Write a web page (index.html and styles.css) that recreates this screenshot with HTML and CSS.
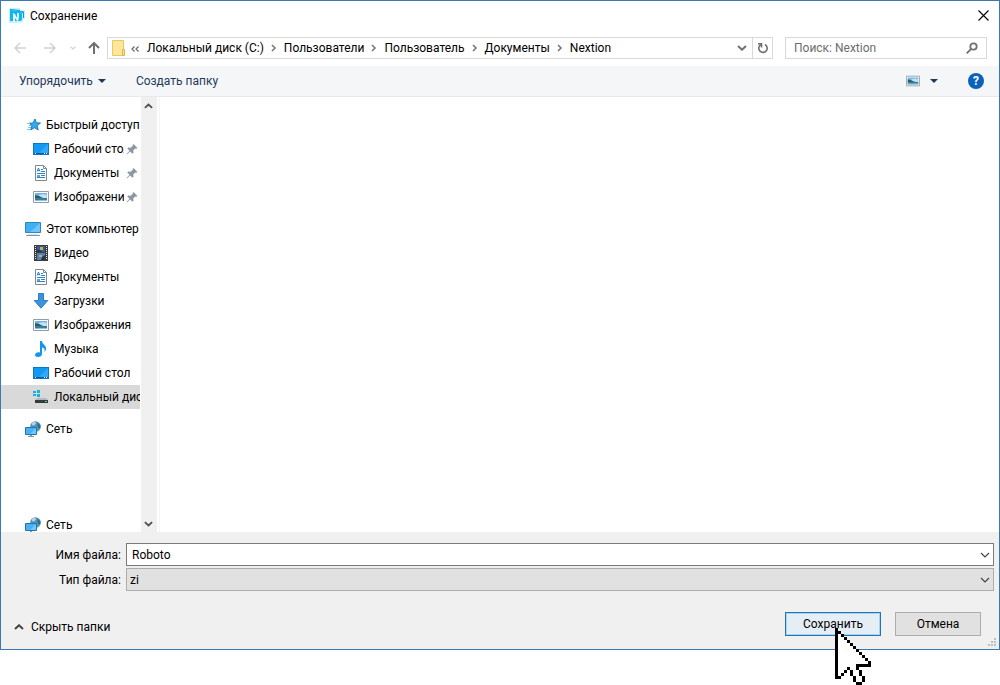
FILE: index.html
```html
<!DOCTYPE html>
<html lang="ru">
<head>
  <meta charset="UTF-8" />
  <meta name="viewport" content="width=device-width, initial-scale=1.0"/>
  <title>Сохранение</title>
  <link rel="stylesheet" href="styles.css">
</head>
<body>
  <!-- shared icons -->
  <svg class="sprite" aria-hidden="true">
    <symbol id="chevron-right" viewBox="0 0 6 8"><path d="M1 1l3 3-3 3" fill="none" stroke="#777" stroke-width="1.6"/></symbol>
    <symbol id="chevron-down" viewBox="0 0 10 6"><path d="M1 1l4 4 4-4" fill="none" stroke="currentColor" stroke-width="1.2"/></symbol>
    <symbol id="chevron-bold" viewBox="0 0 10 6"><path d="M1 1l4 3.7L9 1" fill="none" stroke="currentColor" stroke-width="2"/></symbol>
    <symbol id="caret" viewBox="0 0 8 4"><path d="M0 0h8L4 4z" fill="#1e395b"/></symbol>
    <symbol id="pin" viewBox="0 0 12 12">
      <path d="M7.500 1l4 4-1.500.7-.8-.2-2 2 .3 2.300-1 1L4 8.500 1 11.500l-.5-.5 3-3.200L1.300 5.500l1-1 2.400.3 2-2-.1-.8z" fill="#8c98a3"/>
    </symbol>
    <symbol id="desktop" viewBox="0 0 16 16">
      <path d="M0 2h16v12H0z" fill="#0b77c5"/>
      <path d="M1 3h14v9H1z" fill="#1299f6"/>
      <path d="M15 3v9H6z" fill="#31a9fb"/>
      <path d="M1 12h14v1H1z" fill="#07589c"/>
      <path d="M2 12h1v1H2zM11 12h1v1h-1zM13 12h1v1h-1z" fill="#fff"/>
    </symbol>
    <symbol id="document" viewBox="0 0 16 16">
      <path d="M2.500.5h8l3 3v12h-11z" fill="#fff" stroke="#7e8890"/>
      <path d="M10.500.5v3h3" fill="none" stroke="#7e8890"/>
      <path d="M4 6.500L5.500 3 7 6.500M4.500 5.500h2M8 4.500h2M8 6.500h4M4 8.500h8M8 10.500h4M4 12.500h8" fill="none" stroke="#2c83c6"/>
      <path d="M4 10h3v2H4z" fill="#5aa3d8"/>
    </symbol>
    <symbol id="picture" viewBox="0 0 16 16">
      <path d="M.5 2.500h15v11H.5z" fill="#fff" stroke="#929ca4"/>
      <path d="M2 4h12v8H2z" fill="#76b3e5"/>
      <path d="M6 6l4-1 4 1v3H7z" fill="#c3e0f3"/>
      <path d="M2 6l4 1 5 2.500H2z" fill="#246068"/>
      <path d="M2 9h12v2H2z" fill="#397d98"/>
      <path d="M2 11h12v1H2z" fill="#8cbfd8"/>
    </symbol>
    <symbol id="network" viewBox="0 0 16 16">
      <circle cx="10.500" cy="5.500" r="5.300" fill="#5593b0"/>
      <path d="M7 2l3-1.500 1 2-2 2-2-.5zM8 6l3 1-1 3-2-1z" fill="#b4d8e5"/>
      <path d="M12.500 1.500l3 3-.5 3-2-1-.5-2z" fill="#2d6e90"/>
      <path d="M.5 6.500h11v7H.5z" fill="#49b2f6" stroke="#2374ad"/>
      <path d="M11 7v6H5z" fill="#73c6fa"/>
      <path d="M5 14h2v1h2v1H3v-1h2z" fill="#7d9aad"/>
    </symbol>
  </svg>

  <main class="dialog">
    <header class="titlebar">
      <svg class="icon" viewBox="0 0 16 16">
        <path d="M0 0h11v2h5v9h-2v3l-5 1H0z" fill="#c4f1ff"/>
        <path d="M1 1l10 1v1l4 .5V10h-1V5l-3-.5V3L1 2z" fill="#1399cd"/>
        <path d="M1 2l10 1v2h2v7l-2 1H1z" fill="#0cb6f2"/>
        <path d="M4 14V5l2 1 2 4V5h2v4l-1 5-3-4v4z" fill="#e6faff"/>
      </svg>
      <h1>Сохранение</h1>
      <button type="button" class="close" aria-label="Закрыть">
        <svg width="11" height="11" viewBox="0 0 11 11"><path d="M.5.5l10 10M10.500.5l-10 10" stroke="#000" stroke-width="1.100"/></svg>
      </button>
    </header>

    <nav class="navbar">
      <div class="history">
        <button type="button" aria-label="Назад" disabled>
          <svg width="12" height="12" viewBox="0 0 12 12"><path d="M12 6H1M6 1L1 6l5 5" fill="none" stroke="#d2d2d2" stroke-width="1.500"/></svg>
        </button>
        <button type="button" aria-label="Вперёд" disabled>
          <svg width="12" height="12" viewBox="0 0 12 12"><path d="M0 6h11M6 1l5 5-5 5" fill="none" stroke="#d2d2d2" stroke-width="1.500"/></svg>
        </button>
        <button type="button" class="recent" aria-label="Последние расположения" disabled>
          <svg width="6" height="4"><use href="#chevron-bold"/></svg>
        </button>
        <button type="button" aria-label="Вверх">
          <svg width="12" height="12" viewBox="0 0 12 12"><path d="M6 12V1M1 6l5-5 5 5" fill="none" stroke="#707070" stroke-width="2"/></svg>
        </button>
      </div>
      <div class="address">
        <svg class="folder" width="14" height="16" viewBox="0 0 14 16">
          <path d="M.5.5h11v15H.5z" fill="#ffe79a" stroke="#e8c660"/>
          <path d="M10.500 9.500h2v6h-2z" fill="#ffe08a" stroke="#dcb450"/>
        </svg>
        <svg class="more" width="8" height="6" viewBox="0 0 8 6"><path d="M3.500.5L1 3l2.500 2.500M7.500.5L5 3l2.500 2.500" fill="none" stroke="#666" stroke-width="1.200"/></svg>
        <a href="#">Локальный диск (C:)</a>
        <svg class="sep" width="6" height="8"><use href="#chevron-right"/></svg>
        <a href="#">Пользователи</a>
        <svg class="sep" width="6" height="8"><use href="#chevron-right"/></svg>
        <a href="#">Пользователь</a>
        <svg class="sep" width="6" height="8"><use href="#chevron-right"/></svg>
        <a href="#">Документы</a>
        <svg class="sep" width="6" height="8"><use href="#chevron-right"/></svg>
        <a href="#">Nextion</a>
        <button type="button" class="drop" aria-label="Предыдущие расположения">
          <svg width="10" height="6"><use href="#chevron-bold"/></svg>
        </button>
        <button type="button" class="refresh" aria-label="Обновить">
          <svg width="12" height="12" viewBox="0 0 12 12"><path d="M8 2.500a4.200 4.200 0 1 1-4.500.3M1 1.700h3.500V5.500" fill="none" stroke="#707070" stroke-width="1.600"/></svg>
        </button>
      </div>
      <div class="search">
        <input type="text" placeholder="Поиск: Nextion" aria-label="Поиск">
        <svg width="12" height="12" viewBox="0 0 12 12"><circle cx="7.500" cy="4.500" r="3.200" fill="none" stroke="#707070" stroke-width="1.800"/><path d="M5.200 6.800L.7 11.300" stroke="#707070" stroke-width="1.800"/></svg>
      </div>
    </nav>

    <div class="toolbar">
      <button type="button">Упорядочить <svg width="8" height="4"><use href="#caret"/></svg></button>
      <button type="button">Создать папку</button>
      <button type="button" class="view" aria-label="Вид">
        <svg width="14" height="14"><use href="#picture"/></svg>
        <svg width="8" height="4"><use href="#caret"/></svg>
      </button>
      <button type="button" class="help" aria-label="Справка">?</button>
    </div>

    <div class="content">
      <ul class="tree">
        <li class="root">
          <svg class="icon" viewBox="0 0 16 16">
            <path d="M10 2l1.300 3.800 4.200.2-3.400 2.500 1.100 4.500-3.700-2.300L5.700 13 7 8.600 4 6.200l4-.2z" fill="#35a8ee" stroke="#1c7fc4"/>
            <path d="M2 6.500h3M4 8.500h2M3 10.500h3M2 12.500h3" stroke="#7fc4f0"/>
          </svg>
          <span>Быстрый доступ</span>
        </li>
        <li><svg class="icon"><use href="#desktop"/></svg><span>Рабочий стол</span><svg class="pin"><use href="#pin"/></svg></li>
        <li><svg class="icon"><use href="#document"/></svg><span>Документы</span><svg class="pin"><use href="#pin"/></svg></li>
        <li><svg class="icon"><use href="#picture"/></svg><span>Изображения</span><svg class="pin"><use href="#pin"/></svg></li>
        <li class="root group">
          <svg class="icon" viewBox="0 0 16 16">
            <path d="M.5 1.500h15v10H.5z" fill="#42aef4" stroke="#2d86bd"/>
            <path d="M15 2v9H5z" fill="#6fc5fb"/>
            <path d="M1 14.500h14" stroke="#8198a7"/>
            <path d="M3 13.500h10" stroke="#d4dde3"/>
          </svg>
          <span>Этот компьютер</span>
        </li>
        <li>
          <svg class="icon" viewBox="0 0 16 16">
            <path d="M1 0h14v16H1z" fill="#3c3c3c"/>
            <path d="M2.500 1v14M13.500 1v14" stroke="#e4e4e4" stroke-dasharray="1 1"/>
            <path d="M4 1h8v6H4z" fill="#345b95"/>
            <path d="M4 8h8v7H4z" fill="#4d83c4"/>
            <path d="M7 2h3v3H7zM6 10h3v2H6z" fill="#dba642"/>
            <path d="M4 5h3l2 2H4zM9 12l3-2v5H8z" fill="#263452"/>
          </svg>
          <span>Видео</span>
        </li>
        <li><svg class="icon"><use href="#document"/></svg><span>Документы</span></li>
        <li>
          <svg class="icon" viewBox="0 0 16 16"><path d="M5.500.5h5v7h4.300L8 15.200 1.200 7.500h4.300z" fill="#3b93df" stroke="#2c7ec6"/></svg>
          <span>Загрузки</span>
        </li>
        <li><svg class="icon"><use href="#picture"/></svg><span>Изображения</span></li>
        <li>
          <svg class="icon" viewBox="0 0 16 16">
            <path d="M7 0h2c0 3 4 4 4 7.500 0 1.500-.7 2.500-1.500 3.500.5-3-.5-4-2.500-4.500V13c0 1.700-1.700 3-4 3-1.700 0-3-.8-3-2 0-2 2.500-3.500 5-2.500z" fill="#1497ea"/>
          </svg>
          <span>Музыка</span>
        </li>
        <li><svg class="icon"><use href="#desktop"/></svg><span>Рабочий стол</span></li>
        <li class="selected">
          <svg class="icon" viewBox="0 0 16 16">
            <path d="M0 2h3v2H0zM4 1h3v3H4zM0 5h3v2H0zM4 5h3v3H4z" fill="#18b0e0"/>
            <path d="M4 9h9l2 2H2z" fill="#b3b9bc"/>
            <path d="M2 11h13v3H2z" fill="#343a3d"/>
            <path d="M12 12h2v1h-2z" fill="#4fe05c"/>
          </svg>
          <span>Локальный диск (C:)</span>
        </li>
        <li class="root group"><svg class="icon"><use href="#network"/></svg><span>Сеть</span></li>
        <li class="root last"><svg class="icon"><use href="#network"/></svg><span>Сеть</span></li>
      </ul>
      <div class="scrollbar">
        <button type="button" aria-label="Прокрутить вверх"><svg class="up" width="9" height="6"><use href="#chevron-bold"/></svg></button>
        <button type="button" aria-label="Прокрутить вниз"><svg width="9" height="6"><use href="#chevron-bold"/></svg></button>
      </div>
      <div class="files"></div>
    </div>

    <form class="footer">
      <div class="field">
        <label for="fileName">Имя файла:</label>
        <div class="combo">
          <input type="text" id="fileName" value="Roboto">
          <svg width="10" height="6"><use href="#chevron-down"/></svg>
        </div>
      </div>
      <div class="field">
        <label for="fileType">Тип файла:</label>
        <div class="combo type">
          <select id="fileType"><option>zi</option></select>
          <svg width="10" height="6"><use href="#chevron-down"/></svg>
        </div>
      </div>
      <div class="actions">
        <button type="button" class="hide-folders"><svg class="up" width="10" height="6"><use href="#chevron-bold"/></svg>Скрыть папки</button>
        <div class="save-wrap">
          <button type="button" class="btn save">Сохранить</button>
          <svg class="cursor" viewBox="0 0 12 19" shape-rendering="crispEdges">
            <path d="M0 0h1v1h1v1h1v1h1v1h1v1h1v1h1v1h1v1h1v1h1v1h1v1h1V13H8V14H9V16H10V18H9V19H7V18H6V16H5V14H4V15H3V16H2V17H0z" fill="#000"/>
            <path d="M1 2h1v1h1v1h1v1h1v1h1v1h1v1h1v1h1v1h1v1h1V12H7V14H8V16H9V18H7V16H6V14H5V13H4V14H3V15H2V16H1z" fill="#fff"/>
          </svg>
        </div>
        <button type="button" class="btn">Отмена</button>
      </div>
      <svg class="grip" width="8" height="8" viewBox="0 0 8 8"><path d="M6 0h2v2H6zM3 3h2v2H3zM6 3h2v2H6zM0 6h2v2H0zM3 6h2v2H3zM6 6h2v2H6z" fill="#bfbfbf"/></svg>
    </form>
  </main>
</body>
</html>
```
FILE: styles.css
```css
* {
  box-sizing: border-box;
  margin: 0;
  padding: 0;
}

body {
  min-height: 100vh;
  background-color: #fff;
  color: #000;
  font-family: Roboto, "Open Sans", sans-serif;
  font-size: 12px;
  line-height: 16px;
}

button,
input,
select {
  font: inherit;
  color: inherit;
  background: none;
  border: none;
  outline: none;
}

a {
  color: inherit;
  text-decoration: none;
}

svg {
  flex: none;
}

.sprite {
  display: none;
}

.icon {
  width: 16px;
  height: 16px;
}

.up {
  transform: rotate(180deg);
}

.dialog {
  display: flex;
  flex-direction: column;
  height: calc(100vh - 35px);
  min-height: 400px;
  border: 1px solid #3a7ab0;
}

/* title */
.titlebar {
  display: flex;
  align-items: center;
  height: 29px;
  padding: 0 8px;
}

.titlebar h1 {
  flex: 1;
  margin-left: 5px;
  font-size: 12px;
  font-weight: normal;
}

.close {
  display: flex;
  padding: 2px;
}

/* navigation row */
.navbar {
  display: flex;
  align-items: center;
  height: 36px;
  padding: 0 12px 0 13px;
}

.history {
  display: flex;
  align-items: center;
  width: 93px;
}

.history button {
  display: flex;
  margin-right: 18px;
}

.history .recent {
  margin: 0 12px 0 -4px;
  color: #d2d2d2;
}

.history button:last-child {
  margin-right: 0;
}

.address {
  display: flex;
  align-items: center;
  flex: 1;
  height: 22px;
  border: 1px solid #d9d9d9;
}

.address .folder {
  margin-left: 4px;
}

.address .more {
  margin: 2px 8px 0 5px;
}

.address .sep {
  margin: 0 7px;
}

.address button {
  display: flex;
  align-items: center;
  justify-content: center;
  width: 20px;
  height: 20px;
  color: #707070;
}

.address .drop {
  margin-left: auto;
}

.address .refresh {
  border-left: 1px solid #d9d9d9;
}

.search {
  display: flex;
  align-items: center;
  width: 202px;
  height: 22px;
  margin-left: 12px;
  padding: 0 8px;
  border: 1px solid #d9d9d9;
}

.search input {
  flex: 1;
  min-width: 0;
}

.search input::placeholder {
  color: #6d6d6d;
  opacity: 1;
}

/* toolbar */
.toolbar {
  display: flex;
  align-items: center;
  height: 31px;
  padding: 0 15px 0 18px;
  background-color: #f5f6f7;
  border-bottom: 1px solid #e8e9ea;
  color: #1e395b;
}

.toolbar button {
  display: flex;
  align-items: center;
  gap: 5px;
  margin-right: 30px;
}

.toolbar .view {
  gap: 10px;
  margin: 0 30px 0 auto;
}

.toolbar .help {
  justify-content: center;
  width: 16px;
  height: 16px;
  margin: 0;
  border-radius: 50%;
  background-color: #0b62b8;
  color: #fff;
  font-weight: bold;
}

/* folders and files */
.content {
  display: flex;
  flex: 1;
  min-height: 0;
  overflow: hidden;
}

.tree {
  width: 139px;
  padding-top: 16px;
  list-style: none;
}

.tree li {
  display: flex;
  align-items: center;
  height: 24px;
  padding-left: 32px;
}

.tree li.root {
  padding-left: 24px;
}

.tree li.group {
  margin-top: 8px;
}

.tree li.last {
  margin-top: 72px;
}

.tree li.selected {
  background-color: #d9d9d9;
}

.tree span {
  flex: 1;
  margin-left: 5px;
  overflow: hidden;
  white-space: nowrap;
}

.pin {
  width: 12px;
  height: 12px;
  margin: 0 2px;
}

.scrollbar {
  display: flex;
  flex-direction: column;
  justify-content: space-between;
  width: 16px;
  margin-left: 1px;
  background-color: #f0f0f0;
}

.scrollbar button {
  display: flex;
  align-items: center;
  padding-left: 3px;
  height: 17px;
  color: #505050;
}

.files {
  flex: 1;
  margin-left: 2px;
  border-left: 1px solid #f5f5f5;
}

/* footer */
.footer {
  position: relative;
  padding: 11px 5px 13px 0;
  background-color: #f0f0f0;
}

.field {
  display: flex;
  align-items: center;
  margin-bottom: 2px;
}

.field label {
  width: 120px;
  margin-right: 5px;
  text-align: right;
}

.combo {
  display: flex;
  align-items: center;
  flex: 1;
  height: 23px;
  padding-right: 3px;
  background-color: #fff;
  border: 1px solid #7a7a7a;
  color: #444;
}

.combo.type {
  background-color: #e1e1e1;
  border-color: #adadad;
}

.combo input,
.combo select {
  flex: 1;
  min-width: 0;
  height: 21px;
  padding-left: 5px;
  color: #000;
  appearance: none;
}

.combo select {
  padding-left: 3px;
}

.actions {
  display: flex;
  align-items: center;
  margin-top: 21px;
  padding-right: 13px;
}

.hide-folders {
  display: flex;
  align-items: center;
  gap: 7px;
  margin: 6px auto 0 13px;
}

.hide-folders svg {
  color: #444;
}

.save-wrap {
  position: relative;
  margin-right: 14px;
}

.btn {
  display: block;
  width: 86px;
  height: 24px;
  background-color: #e1e1e1;
  border: 1px solid #adadad;
}

.btn.save {
  width: 96px;
  background-color: #e5edf5;
  border-color: #2474b5;
  box-shadow: inset 0 0 0 1px #a5d5f5;
}

.cursor {
  position: absolute;
  top: 16px;
  left: 50px;
  width: 36px;
  height: 57px;
  pointer-events: none;
}

.grip {
  position: absolute;
  right: 3px;
  bottom: 3px;
}
```
